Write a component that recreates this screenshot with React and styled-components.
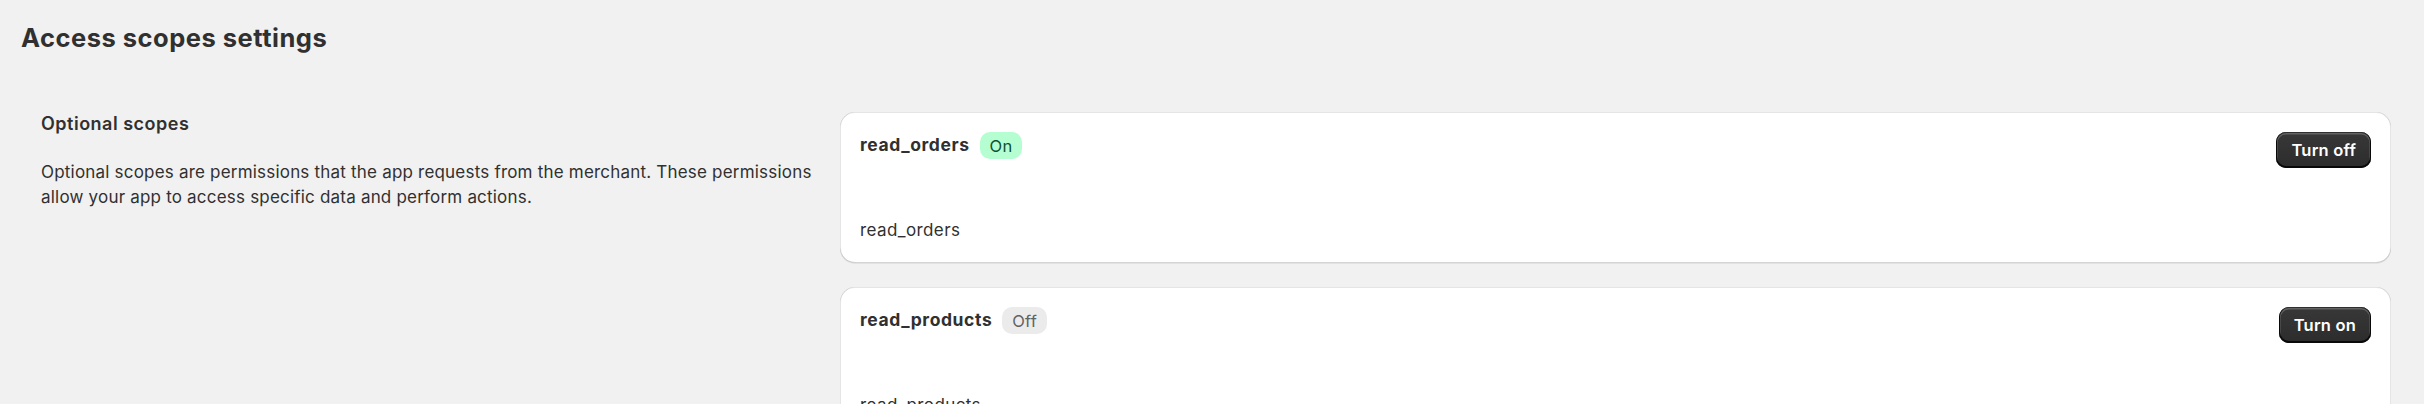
import React from 'react';
import styled, { createGlobalStyle } from 'styled-components';

const textColor = '#303030';
const pageBg = '#f1f1f1';

const GlobalStyle = createGlobalStyle`
  html, body {
    margin: 0;
    padding: 0;
    background: ${pageBg};
    overflow: hidden;
  }
  body {
    font-family: Inter, "Noto Sans", "Liberation Sans", sans-serif;
    color: ${textColor};
    -webkit-font-smoothing: antialiased;
  }
`;

const Page = styled.div`
  padding: 23px 33px 0 21px;
`;

const Title = styled.h1`
  margin: 0;
  font-size: 25.5px;
  line-height: 30px;
  font-weight: 700;
  letter-spacing: 0.5px;
`;

const Layout = styled.div`
  display: flex;
  align-items: flex-start;
  margin-top: 38px;
`;

const Annotation = styled.div`
  flex: 0 0 819px;
  box-sizing: border-box;
  padding: 20px 20px 0 20px;
`;

const SectionHeading = styled.h2`
  margin: 0;
  font-size: 18px;
  line-height: 25px;
  font-weight: 600;
  letter-spacing: 0.5px;
`;

const Description = styled.p`
  margin: 24px 0 0;
  font-size: 17px;
  line-height: 25px;
  letter-spacing: 0.2px;
`;

const CardStack = styled.div`
  flex: 1 1 auto;
  display: flex;
  flex-direction: column;
  gap: 24px;
  margin-top: 21px;
`;

const Card = styled.div`
  background: #fff;
  border-radius: 15px;
  padding: 20px;
  box-shadow:
    inset 1px 0 0 0 rgba(0, 0, 0, 0.1),
    inset -1px 0 0 0 rgba(0, 0, 0, 0.1),
    inset 0 -1px 0 0 rgba(0, 0, 0, 0.17),
    inset 0 1px 0 0 rgba(204, 204, 204, 0.5),
    0 1px 0 0 rgba(26, 26, 26, 0.07);
`;

const CardHeader = styled.div`
  display: flex;
  align-items: flex-start;
  justify-content: space-between;
`;

const TitleGroup = styled.div`
  display: flex;
  align-items: flex-start;
  gap: 10px;
`;

const ScopeName = styled.span`
  font-size: 17.5px;
  line-height: 25px;
  font-weight: 700;
  letter-spacing: 0.6px;
`;

const Badge = styled.span`
  font-size: 16.5px;
  line-height: 22px;
  padding: 2.5px 10px;
  border-radius: 10px;
  letter-spacing: 0.2px;
  background: ${p => (p.$on ? '#b4fed2' : '#ebebeb')};
  color: ${p => (p.$on ? '#0c5132' : '#616161')};
`;

const Button = styled.button`
  height: 36px;
  box-sizing: border-box;
  display: flex;
  align-items: center;
  padding: 0 15px;
  border: none;
  border-radius: 10px;
  font-family: inherit;
  font-size: 16.5px;
  font-weight: 600;
  letter-spacing: 0.2px;
  color: #fff;
  background: linear-gradient(180deg, #383838 0%, #2c2c2c 100%);
  box-shadow:
    inset 0 -1px 0 1px rgba(0, 0, 0, 0.8),
    inset 0 0 0 1px #303030,
    inset 0 1px 0 1.5px rgba(255, 255, 255, 0.22);
  cursor: pointer;
`;

const ScopeText = styled.div`
  margin-top: 50px;
  font-size: 17px;
  line-height: 25px;
  letter-spacing: 0.4px;
`;

const scopes = [
  { id: 'read_orders', on: true },
  { id: 'read_products', on: false },
];

export default function App() {
  return (
    <>
      <GlobalStyle />
      <Page>
        <Title>Access scopes settings</Title>
        <Layout>
          <Annotation>
            <SectionHeading>Optional scopes</SectionHeading>
            <Description>
              Optional scopes are permissions that the app requests from the merchant. These
              permissions allow your app to access specific data and perform actions.
            </Description>
          </Annotation>
          <CardStack>
            {scopes.map(scope => (
              <Card key={scope.id}>
                <CardHeader>
                  <TitleGroup>
                    <ScopeName>{scope.id}</ScopeName>
                    <Badge $on={scope.on}>{scope.on ? 'On' : 'Off'}</Badge>
                  </TitleGroup>
                  <Button>{scope.on ? 'Turn off' : 'Turn on'}</Button>
                </CardHeader>
                <ScopeText>{scope.id}</ScopeText>
              </Card>
            ))}
          </CardStack>
        </Layout>
      </Page>
    </>
  );
}
